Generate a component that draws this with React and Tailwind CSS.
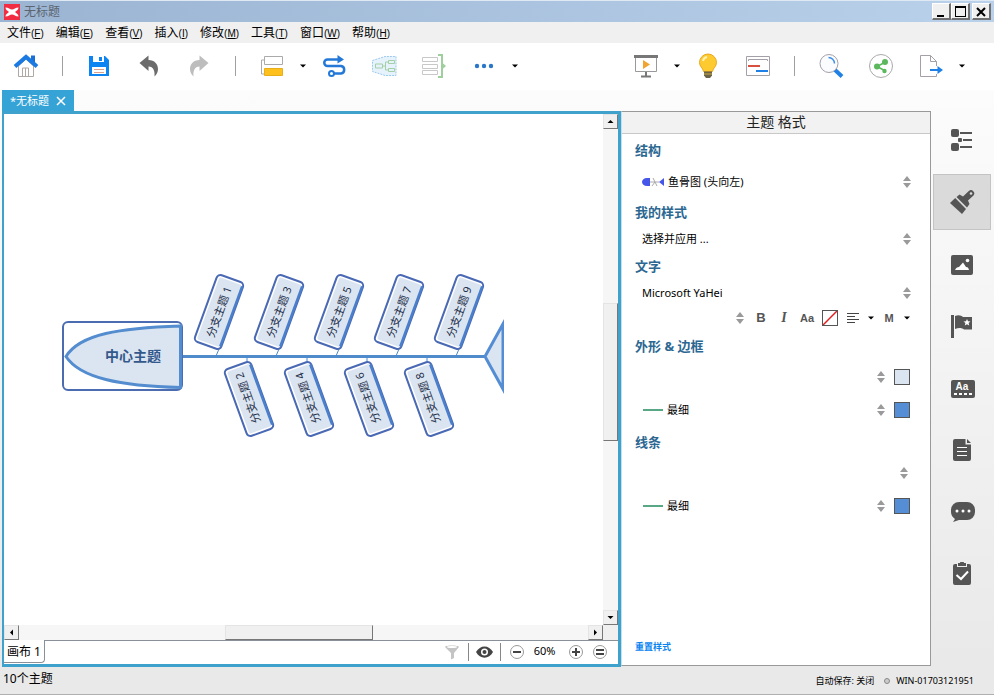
import React, { useState } from 'react'

const menus = [
  { label: '文件', hotkey: 'F' },
  { label: '编辑', hotkey: 'E' },
  { label: '查看', hotkey: 'V' },
  { label: '插入', hotkey: 'I' },
  { label: '修改', hotkey: 'M' },
  { label: '工具', hotkey: 'T' },
  { label: '窗口', hotkey: 'W' },
  { label: '帮助', hotkey: 'H' },
]

const upperTopics = [
  { x: 219, name: '分支主题 1' },
  { x: 279, name: '分支主题 3' },
  { x: 339, name: '分支主题 5' },
  { x: 399, name: '分支主题 7' },
  { x: 459, name: '分支主题 9' },
]

const lowerTopics = [
  { x: 249, name: '分支主题 2' },
  { x: 309, name: '分支主题 4' },
  { x: 369, name: '分支主题 6' },
  { x: 429, name: '分支主题 8' },
]

/* ---------- toolbar icons ---------- */

function HomeIcon() {
  return (
    <svg width="26" height="24" viewBox="0 0 26 24" fill="none">
      <path d="M5.500 12v10.500h15V12L13 5z" fill="#fff" stroke="#b0a8a4" />
      <path d="M9.500 22.500v-8.500h6v8.500M12.500 14v8.500" stroke="#b0a8a4" />
      <path d="M18 1.500h4v7h-4z" fill="#1a6fd6" />
      <path d="M2 12.500L13 3l11 9.500" stroke="#1a7ae2" strokeWidth="4" />
    </svg>
  )
}

function SaveIcon() {
  return (
    <svg width="22" height="22" viewBox="0 0 22 22">
      <path d="M1 1h16l4 4v16H1z" fill="#0c84f2" />
      <path d="M5 1h11v6H5z" fill="#fff" />
      <path d="M11 2h3v4h-3z" fill="#0c84f2" />
      <path d="M4 12h14v7H4z" fill="#fff" />
      <path d="M6 14.500h10M6 17.500h10" stroke="#d9a08c" />
    </svg>
  )
}

function UndoIcon({ color }) {
  return (
    <svg width="20" height="22" viewBox="0 0 20 22">
      <path d="M0.500 8L9.500 0.500v4.500c6 0 9.500 4 9.500 9 0 3-1.500 6-3.500 7.500C16 16 14.500 11.500 9.500 11.500v4.500z" fill={color} />
    </svg>
  )
}

function TopicIcon() {
  return (
    <svg width="24" height="22" viewBox="0 0 24 22" fill="none">
      <path d="M4 5H1.500v14H4" stroke="#aaa" />
      <path d="M4.500 1.500h18v8h-18z" fill="#fff" stroke="#aaa" />
      <path d="M4.500 13.500h18v7h-18z" fill="#fdc01c" stroke="#e8ae1a" />
    </svg>
  )
}

function RelationIcon() {
  return (
    <svg width="24" height="24" viewBox="0 0 24 24" fill="none">
      <path d="M17 5.500H5.500a3.200 3.200 0 0 0 0 6.500H19a3.800 3.800 0 0 1 0 7.500h-7" stroke="#2479d8" strokeWidth="2.500" />
      <path d="M15.500 1L22 5.500 15.500 9.500z" fill="#2479d8" />
      <circle cx="9.500" cy="19.500" r="2.500" fill="#fff" stroke="#2479d8" strokeWidth="2" />
    </svg>
  )
}

function BoundaryIcon() {
  return (
    <svg width="26" height="22" viewBox="0 0 26 22" fill="none">
      <path d="M1.500 5.500L14 1.500h11v19H14L1.500 16.500z" fill="#e6f3fd" stroke="#9cc9ee" strokeDasharray="2 1" />
      <path d="M4.500 9h7v4h-7zM17.500 5.500h6v3h-6zM17.500 13.500h6v3h-6zM11.500 11h3M17.500 7h-3v8h3" stroke="#a5cfa5" />
    </svg>
  )
}

function SummaryIcon() {
  return (
    <svg width="26" height="26" viewBox="0 0 26 26" fill="none">
      <path d="M1.500 4.500h15v4h-15zM1.500 11.500h15v4h-15zM1.500 17.500h15v4h-15z" stroke="#c8c8c8" />
      <path d="M17 2h4v22h-4" stroke="#9fce9f" strokeWidth="2" />
      <path d="M21 9.500l4 3.500-4 3.500z" fill="#9fce9f" />
    </svg>
  )
}

function DotsIcon() {
  return (
    <svg width="20" height="6" viewBox="0 0 20 6" fill="#2a76c9">
      <circle cx="3" cy="3" r="2.200" />
      <circle cx="10" cy="3" r="2.200" />
      <circle cx="17" cy="3" r="2.200" />
    </svg>
  )
}

function PresentIcon() {
  return (
    <svg width="24" height="24" viewBox="0 0 24 24" fill="none">
      <path d="M1.500 3v14.500h21V3" fill="#fff" stroke="#999" />
      <path d="M0 1h24v3H0z" fill="#777" />
      <path d="M9 6l7 4.500L9 15z" fill="#f0a530" />
      <path d="M12 18v4M7 22.500h10" stroke="#777" strokeWidth="2" />
    </svg>
  )
}

function BulbIcon() {
  return (
    <svg width="20" height="26" viewBox="0 0 20 26">
      <path d="M10 1a8.500 8.500 0 0 1 8.500 8.500c0 4-3.500 5.500-4 9h-9c-.5-3.500-4-5-4-9A8.500 8.500 0 0 1 10 1z" fill="#fdcb30" stroke="#e8a81e" />
      <path d="M5 8a5 5 0 0 1 4-4" fill="none" stroke="#fff2b8" strokeWidth="2" />
      <path d="M6 18.500h8v4l-2 2.500H8l-2-2.500z" fill="#6b6248" />
      <path d="M6 21h8" stroke="#c9a944" />
    </svg>
  )
}

function SlideIcon() {
  return (
    <svg width="26" height="22" viewBox="0 0 26 22" fill="none">
      <path d="M1.500 1.500h23v19h-23z" fill="#fff" stroke="#a5a0a8" />
      <path d="M3.500 6V4.500h19V6" stroke="#a5a0a8" />
      <path d="M3 11h12" stroke="#d9503f" strokeWidth="2" />
      <path d="M11 16h12" stroke="#1f80e6" strokeWidth="2" />
    </svg>
  )
}

function SearchIcon() {
  return (
    <svg width="26" height="26" viewBox="0 0 26 26" fill="none">
      <path d="M16 16l8 7.500" stroke="#1f80e6" strokeWidth="4" />
      <circle cx="11" cy="10.500" r="9" fill="#fbfcff" stroke="#a5a0a8" />
      <path d="M10.500 4.500a6 6 0 0 1 6 6" stroke="#3d90ea" strokeWidth="1.500" />
    </svg>
  )
}

function ShareIcon() {
  return (
    <svg width="26" height="26" viewBox="0 0 26 26" fill="none">
      <circle cx="13" cy="13" r="11.500" fill="#fff" stroke="#aaa" />
      <path d="M17.500 9L9 13.500l7.500 4" stroke="#5cb85c" strokeWidth="1.500" />
      <circle cx="17" cy="9" r="3" fill="#5cb85c" />
      <circle cx="9" cy="13.500" r="3" fill="#5cb85c" />
      <circle cx="16.500" cy="18" r="2.200" fill="#5cb85c" />
    </svg>
  )
}

function ExportIcon() {
  return (
    <svg width="24" height="24" viewBox="0 0 24 24" fill="none">
      <path d="M17.500 12V7.500l-6-6h-10v21h16V20" fill="#fff" stroke="#a5a0a8" />
      <path d="M11.500 1.500v6h6" stroke="#a5a0a8" />
      <path d="M11 16h9" stroke="#1f80e6" strokeWidth="2" />
      <path d="M18.500 12l5.500 4-5.500 4z" fill="#1f80e6" />
    </svg>
  )
}

/* ---------- small shared pieces ---------- */

function ToolButton({ label, children }) {
  return (
    <button aria-label={label} className="flex h-9 w-[50px] items-center justify-center">
      {children}
    </button>
  )
}

function Caret({ label }) {
  return (
    <button aria-label={label} className="flex h-4 w-3 items-center justify-center">
      <svg width="6" height="4" viewBox="0 0 6 4">
        <path d="M0 0.500h6l-3 3z" fill="#000" />
      </svg>
    </button>
  )
}

function Separator() {
  return (
    <div className="flex w-[23px] justify-center">
      <div className="h-5 w-px bg-[#a0a0a0]"></div>
    </div>
  )
}

function UpDown() {
  return (
    <svg width="8" height="12" viewBox="0 0 8 12" className="shrink-0" fill="#9a9a9a">
      <path d="M4 0l4 5H0zM4 12l4-5H0z" />
    </svg>
  )
}

function PickerRow({ label, value, icon, className }) {
  return (
    <div className={'flex items-center ' + className}>
      {icon}
      <select aria-label={label} className="min-w-0 flex-1 appearance-none bg-transparent outline-none">
        <option>{value}</option>
      </select>
      <UpDown />
    </div>
  )
}

function Swatch({ label, className }) {
  return <button aria-label={label} className={'size-4 border border-[#555] ' + className}></button>
}

function GreenLine() {
  return <div className="mr-1 h-0.5 w-5 bg-[#58a886]"></div>
}

function Heading({ children, className = '' }) {
  return <h3 className={'flex h-6 items-center text-[13px] font-bold text-[#2b6791] ' + className}>{children}</h3>
}

/* ---------- window chrome ---------- */

function TitleBar() {
  return (
    <header className="flex h-[22px] shrink-0 items-center border-t border-[#dfe9f3] bg-linear-to-r from-[#9bb4d2] to-[#b9d1ea] pr-[3px] pl-1">
      <svg width="16" height="16" viewBox="0 0 16 16">
        <path d="M0 0h16v16H0z" fill="#f22c42" />
        <path d="M1.500 3.500c3 0 4.500 2 6.500 2s3.500-2 6.500-2c0 2.500-2 3-3.500 4.500 1.500 1.500 3.500 2 3.500 4.500-3 0-4.500-2-6.500-2s-3.500 2-6.500 2c0-2.500 2-3 3.500-4.500-1.500-1.500-3.500-2-3.500-4.500z" fill="#fff" />
      </svg>
      <h1 className="ml-1 flex-1 text-xs text-[#5b6470]">无标题</h1>
      <WindowButton label="最小化">
        <path d="M4 11h7v2H4z" />
      </WindowButton>
      <WindowButton label="最大化">
        <path d="M3 2h11v11H3zM4 4v8h9V4z" fillRule="evenodd" />
      </WindowButton>
      <div className="w-0.5"></div>
      <WindowButton label="关闭">
        <path d="M4 4l8 8M12 4l-8 8" stroke="#000" strokeWidth="2" />
      </WindowButton>
    </header>
  )
}

function WindowButton({ label, children }) {
  return (
    <button
      aria-label={label}
      className="flex h-[17px] w-[19px] items-center justify-center border-t border-r-2 border-b-2 border-l border-t-white border-r-[#707070] border-b-[#707070] border-l-white bg-[#f0f0f0]"
    >
      <svg width="16" height="15" viewBox="0 0 16 15">
        {children}
      </svg>
    </button>
  )
}

function MenuBar() {
  return (
    <nav className="flex h-[21px] shrink-0 items-center gap-3 bg-[#f0f0f0] pl-[7px]">
      {menus.map((m) => (
        <button key={m.hotkey} className="flex items-baseline text-xs">
          {m.label}
          <span className="font-['Liberation_Sans'] text-[10px]">
            (<u>{m.hotkey}</u>)
          </span>
        </button>
      ))}
    </nav>
  )
}

function Toolbar() {
  return (
    <div className="flex h-[47px] shrink-0 items-center justify-between bg-white pr-[26px] pb-0.5 pl-px">
      <div className="flex items-center">
        <ToolButton label="主页"><HomeIcon /></ToolButton>
        <Separator />
        <ToolButton label="保存"><SaveIcon /></ToolButton>
        <ToolButton label="撤销"><UndoIcon color="#6c6c6c" /></ToolButton>
        <ToolButton label="重做">
          <span className="-scale-x-100"><UndoIcon color="#bdbdbd" /></span>
        </ToolButton>
        <Separator />
        <ToolButton label="主题"><TopicIcon /></ToolButton>
        <Caret label="更多主题" />
        <ToolButton label="联系"><RelationIcon /></ToolButton>
        <ToolButton label="外框"><BoundaryIcon /></ToolButton>
        <ToolButton label="概要"><SummaryIcon /></ToolButton>
        <ToolButton label="更多"><DotsIcon /></ToolButton>
        <Caret label="更多工具" />
      </div>
      <div className="flex items-center">
        <ToolButton label="演示"><PresentIcon /></ToolButton>
        <Caret label="演示选项" />
        <ToolButton label="头脑风暴"><BulbIcon /></ToolButton>
        <ToolButton label="甘特图"><SlideIcon /></ToolButton>
        <Separator />
        <ToolButton label="搜索"><SearchIcon /></ToolButton>
        <ToolButton label="分享"><ShareIcon /></ToolButton>
        <ToolButton label="导出"><ExportIcon /></ToolButton>
        <Caret label="导出选项" />
      </div>
    </div>
  )
}

/* ---------- fishbone canvas ---------- */

function TopicBox({ x, y, angle }) {
  return (
    <g transform={`translate(${x} ${y}) rotate(${angle})`}>
      <rect x="-14" y="-35.500" width="28" height="71" rx="4" fill="#fff" stroke="#4a69b4" strokeWidth="2" />
      <rect x="-11.500" y="-33" width="24" height="66" rx="2" fill="#dbe5f1" />
      <path d="M13 -32v64" stroke="#4a7fcb" strokeWidth="2.500" />
    </g>
  )
}

function Fishbone() {
  return (
    <svg
      width="444"
      height="170"
      viewBox="60 271 444 170"
      textAnchor="middle"
      className="shrink-0 text-[11px]"
      fill="#1f2f4a"
    >
      <path d="M182 356.500h303" stroke="#4f8acb" strokeWidth="3" />
      <rect x="63" y="322" width="119" height="68" rx="5" fill="#fff" stroke="#4c6cb2" strokeWidth="2" />
      <path d="M180.500 326C120 328 80 334 66 356.500 80 378 120 386 180.500 387.500z" fill="#dbe5f1" stroke="#548dcf" strokeWidth="3" />
      <text x="133" y="361" className="text-sm font-bold" fill="#33588c">中心主题</text>
      <path d="M485 356.500L503 324v65z" fill="#dbe5f1" stroke="#548dd4" strokeWidth="3" />
      {upperTopics.map((t) => (
        <g key={t.name}>
          <path d={`M${t.x} 349l-3 7`} stroke="#4f8acb" />
          <TopicBox x={t.x} y={312} angle={20} />
          <text transform={`translate(${t.x} 312) rotate(-70)`} y="4">{t.name}</text>
        </g>
      ))}
      {lowerTopics.map((t) => (
        <g key={t.name}>
          <path d={`M${t.x - 2} 357v6`} stroke="#4f8acb" />
          <TopicBox x={t.x} y={399} angle={-20} />
          <text transform={`translate(${t.x - 1} 398) rotate(-110)`} y="4">{t.name}</text>
        </g>
      ))}
    </svg>
  )
}

function ScrollButton({ label, d }) {
  return (
    <button
      aria-label={label}
      className="flex size-[15px] shrink-0 items-center justify-center border border-t-[#e4e4e4] border-r-[#777] border-b-[#777] border-l-[#e4e4e4] bg-[#f0f0f0]"
    >
      <svg width="7" height="7" viewBox="0 0 7 7">
        <path d={d} />
      </svg>
    </button>
  )
}

function Editor() {
  return (
    <section className="flex min-w-0 flex-1 flex-col pl-0.5">
      <div className="flex">
        <div className="flex h-[21px] w-[72px] items-center justify-between bg-[#35a3d6] pr-2 pl-2 text-white">
          <button className="pt-0.5 text-[11px]">*无标题</button>
          <button aria-label="关闭标签">
            <svg width="10" height="10" viewBox="0 0 10 10" stroke="#fff" strokeWidth="1.500">
              <path d="M1 1l8 8M9 1l-8 8" />
            </svg>
          </button>
        </div>
      </div>
      <div className="flex min-h-0 flex-1 flex-col border-t-3 border-r-3 border-b-3 border-l-2 border-[#3fa2cd] bg-white">
        <div className="flex min-h-0 flex-1">
          <div className="flex min-w-0 flex-1 items-start overflow-hidden pt-[157px] pl-14">
            <Fishbone />
          </div>
          <div className="flex w-[15px] flex-col bg-[#f6f6f6]">
            <ScrollButton label="向上滚动" d="M0.500 5h6l-3-3z" />
            <div className="h-[174px]"></div>
            <div className="h-[138px] border border-t-[#e4e4e4] border-r-[#777] border-b-[#777] border-l-[#e4e4e4] bg-[#f0f0f0]"></div>
            <div className="flex-1"></div>
            <ScrollButton label="向下滚动" d="M0.500 2h6l-3 3z" />
          </div>
        </div>
        <div className="flex h-[15px] shrink-0 bg-[#f0f0f0]">
          <div className="flex flex-1 bg-[#f6f6f6]">
            <ScrollButton label="向左滚动" d="M5 0.500v6l-3-3z" />
            <div className="w-[206px]"></div>
            <div className="w-[148px] border border-t-[#e4e4e4] border-r-[#777] border-b-[#777] border-l-[#e4e4e4] bg-[#f0f0f0]"></div>
            <div className="flex-1"></div>
            <ScrollButton label="向右滚动" d="M2 0.500v6l3-3z" />
          </div>
          <div className="w-[15px]"></div>
        </div>
        <SheetBar />
      </div>
    </section>
  )
}

function RoundIcon({ d }) {
  return (
    <svg width="16" height="16" viewBox="0 0 16 16" fill="none">
      <circle cx="8" cy="8" r="6.500" stroke="#999" />
      <path d={d} stroke="#444" strokeWidth="2" />
    </svg>
  )
}

function SheetBar() {
  return (
    <div className="flex h-6 shrink-0 justify-between">
      <button className="mb-px h-[23px] w-[41px] rounded-br border-r border-b border-[#8a9097] pt-px text-center text-xs">画布 1</button>
      <div className="flex flex-1 items-center justify-end border-t border-[#8a9097] pr-2.5 pb-0.5">
        <button aria-label="筛选">
          <svg width="16" height="16" viewBox="0 0 16 16">
            <path d="M1 3c0-2 14-2 14 0L10 9v5l-3 1.500V9z" fill="#c4c4c4" />
            <ellipse cx="8" cy="3" rx="5" ry="1" fill="#fff" />
          </svg>
        </button>
        <div className="ml-2 h-[18px] w-px bg-[#888]"></div>
        <button aria-label="显示" className="mx-[7px]">
          <svg width="17" height="14" viewBox="0 0 17 14">
            <path d="M0 7C4-.5 13-.5 17 7c-4 7.500-13 7.500-17 0z" fill="#444" />
            <circle cx="8.500" cy="7" r="3.500" fill="#fff" />
            <circle cx="8.500" cy="7" r="2" fill="#444" />
          </svg>
        </button>
        <div className="mr-2 h-[18px] w-px bg-[#888]"></div>
        <button aria-label="缩小"><RoundIcon d="M4 8h8" /></button>
        <span className="w-[43px] pr-1 text-center text-[11px]">60%</span>
        <button aria-label="放大"><RoundIcon d="M4 8h8M8 4v8" /></button>
        <button aria-label="实际大小" className="ml-2"><RoundIcon d="M4 6h8M4 10h8" /></button>
      </div>
    </div>
  )
}

/* ---------- format panel ---------- */

function FormatPanel() {
  return (
    <aside className="mt-[21px] mb-px flex w-[310px] shrink-0 flex-col border border-l-[#c9dfe8] border-t-[#999] border-r-[#999] border-b-[#999] bg-white text-[11px]">
      <h2 className="flex h-[22px] shrink-0 items-center justify-center border-b border-[#c8c8c8] bg-[#f2f2f2] pb-0.5 text-sm text-[#222]">
        主题 格式
      </h2>
      <div className="flex flex-1 flex-col pt-[5px] pr-[19px] pb-3 pl-[13px]">
        <Heading>结构</Heading>
        <PickerRow
          label="结构"
          value="鱼骨图 (头向左)"
          className="h-[38px] pl-[7px]"
          icon={
            <svg width="22" height="10" viewBox="0 0 22 10" className="mr-1">
              <path d="M8 1v8H5C2 9 0 7 0 5s2-4 5-4zM22 1v8l-5-4z" fill="#4656e8" />
              <path d="M8 5h9M10 9l3-4-2-4M15 9l-2-4" fill="none" stroke="#aaa" />
            </svg>
          }
        />
        <Heading>我的样式</Heading>
        <PickerRow label="我的样式" value="选择并应用 ..." className="h-7 pl-[7px]" />
        <Heading className="mt-0.5">文字</Heading>
        <PickerRow label="字体" value="Microsoft YaHei" className="h-7 pl-[7px]" />
        <div className="-mr-0.5 flex h-[22px] items-center justify-end font-['Liberation_Sans'] text-xs font-bold text-[#555]">
          <button aria-label="字号"><UpDown /></button>
          <button className="ml-1 w-[26px] text-[13px]">B</button>
          <button className="w-5 font-['Liberation_Serif'] text-sm italic">I</button>
          <button className="w-[26px] text-[11px]">Aa</button>
          <button aria-label="文字颜色" className="ml-0.5 size-4 border border-[#555]">
            <svg width="14" height="14" viewBox="0 0 14 14">
              <path d="M0 14L14 0" stroke="#e02020" strokeWidth="1.500" />
            </svg>
          </button>
          <button aria-label="对齐" className="ml-[9px]">
            <svg width="12" height="12" viewBox="0 0 12 12" stroke="#444">
              <path d="M0 1.500h12M0 4.500h8M0 7.500h12M0 10.500h8" />
            </svg>
          </button>
          <span className="ml-1.5 flex"><Caret label="对齐方式" /></span>
          <button className="w-6 text-[11px]">M</button>
          <Caret label="大小写" />
        </div>
        <Heading className="mt-1.5">外形 & 边框</Heading>
        <div className="flex h-9 items-center gap-[9px] pr-px">
          <PickerRow label="外形" value="" className="flex-1 pl-2" />
          <Swatch label="填充颜色" className="bg-[#dbe5f1]" />
        </div>
        <div className="flex h-[30px] items-center gap-[9px] pr-px">
          <PickerRow label="边框粗细" value="最细" className="flex-1 pl-2" icon={<GreenLine />} />
          <Swatch label="边框颜色" className="bg-[#558ed5]" />
        </div>
        <Heading className="mt-1.5">线条</Heading>
        <PickerRow label="线条样式" value="" className="h-9 pr-[3px] pl-2" />
        <div className="flex h-[30px] items-center gap-[9px] pr-px">
          <PickerRow label="线条粗细" value="最细" className="flex-1 pl-2" icon={<GreenLine />} />
          <Swatch label="线条颜色" className="bg-[#558ed5]" />
        </div>
        <a href="#reset" className="mt-auto self-start text-[9px] font-bold text-[#0a84f0]">重置样式</a>
      </div>
    </aside>
  )
}

/* ---------- right side tabs ---------- */

const sideTabs = [
  {
    name: '大纲',
    icon: (
      <>
        <rect x="1" y="1" width="8" height="8" rx="2" />
        <rect x="1" y="15" width="8" height="8" rx="2" />
        <rect x="8" y="10" width="4" height="4" rx="1" />
        <path d="M10 4h12v2H10zM13 11h9v2h-9zM10 18h12v2H10z" />
      </>
    ),
  },
  {
    name: '格式',
    icon: (
      <>
        <path d="M5.200 8L16 19l-4 5L0 13z" />
        <path d="M6.500 7l3-2.500 3.500 2L18.500 1.200A3.300 3.300 0 0 1 23.500 5.500L18 10.500l1.500 3.500L17 17.500z" />
        <circle cx="21" cy="3.500" r="1.300" fill="#dadada" />
      </>
    ),
  },
  {
    name: '图片',
    icon: (
      <>
        <rect x="1" y="3" width="22" height="20" rx="2" />
        <path d="M5 18c1-2 2-3 4-3l4-4.500 3 4.500c2 0 2.500 1 3 3z" fill="#fff" />
        <circle cx="17.500" cy="8.500" r="1.800" fill="#fff" />
      </>
    ),
  },
  {
    name: '图标',
    icon: (
      <>
        <path d="M1 1h3v23H1zM5 2c4-1.500 6-.5 8 1h9v12.500h-8C12 14 9 13.500 5 15z" />
        <path d="M17 5l1 2.300 2.500.200-1.900 1.600.6 2.400L17 10.200l-2.200 1.300.6-2.400-1.900-1.600 2.500-.200z" fill="#fff" />
      </>
    ),
  },
  {
    name: '标签',
    icon: (
      <>
        <rect x="1" y="4" width="24" height="18" rx="2" />
        <text x="12" y="14" fill="#fff" textAnchor="middle" className="font-['Liberation_Sans'] text-[10px] font-bold">Aa</text>
        <path d="M4 17h3v2H4zM9 17h3v2H9zM14 17h3v2h-3zM19 17h3v2h-3z" fill="#fff" />
      </>
    ),
  },
  {
    name: '备注',
    icon: (
      <>
        <path d="M5 1h10.500v5.500H21V21a2 2 0 0 1-2 2H5a2 2 0 0 1-2-2V3a2 2 0 0 1 2-2z" />
        <path d="M17 1l4 4h-4z" />
        <path d="M7 9.500h10M7 13.500h10M7 17.500h10" stroke="#fff" />
      </>
    ),
  },
  {
    name: '批注',
    icon: (
      <>
        <path d="M9 2h8a8 8 0 0 1 8 8v2a8 8 0 0 1-8 8H9l-6 2 2-3c-2.500-2-4-4-4-7v-2a8 8 0 0 1 8-8z" />
        <circle cx="7" cy="11" r="1.500" fill="#fff" />
        <circle cx="13" cy="11" r="1.500" fill="#fff" />
        <circle cx="19" cy="11" r="1.500" fill="#fff" />
      </>
    ),
  },
  {
    name: '任务',
    icon: (
      <>
        <path d="M5 2h2v3h10V2h2a2 2 0 0 1 2 2v17a2 2 0 0 1-2 2H5a2 2 0 0 1-2-2V4a2 2 0 0 1 2-2z" />
        <path d="M8 1h2a2 1.500 0 0 1 4 0h2v3H8z" />
        <path d="M6.500 13l4.500 4 7-7.500" fill="none" stroke="#fff" strokeWidth="2" />
      </>
    ),
  },
]

function SideTabs() {
  const [active, setActive] = useState('格式')

  return (
    <nav className="flex w-[63px] shrink-0 flex-col gap-1.5 pt-[22px] pr-[3px] pl-0.5">
      {sideTabs.map((tab) => (
        <button
          key={tab.name}
          aria-label={tab.name}
          onClick={() => setActive(tab.name)}
          className={
            'flex h-14 items-center justify-center border ' +
            (active === tab.name ? 'border-[#c4c4c4] bg-[#dadada]' : 'border-transparent')
          }
        >
          <svg width="26" height="24" viewBox="0 0 26 24" fill="#555" className="ml-0.5">
            {tab.icon}
          </svg>
        </button>
      ))}
    </nav>
  )
}

export default function App() {
  return (
    <div className="flex h-screen flex-col border-b border-[#b0b0b0] bg-linear-to-b from-white to-[#e8e8e8] font-['Noto_Sans','Noto_Sans_CJK_SC',sans-serif] text-xs text-black">
      <TitleBar />
      <MenuBar />
      <Toolbar />
      <main className="flex min-h-0 flex-1">
        <Editor />
        <FormatPanel />
        <SideTabs />
      </main>
      <footer className="flex h-[27px] shrink-0 items-center justify-between bg-[#e9e9e9] pr-5 pl-[3px]">
        <span className="pb-1">10个主题</span>
        <div className="flex items-center text-[9px]">
          <span>自动保存: 关闭</span>
          <span className="mr-1.5 ml-2.5 size-1.5 rounded-full border border-[#888] bg-[#ccc]"></span>
          <span>WIN-01703121951</span>
        </div>
      </footer>
    </div>
  )
}
